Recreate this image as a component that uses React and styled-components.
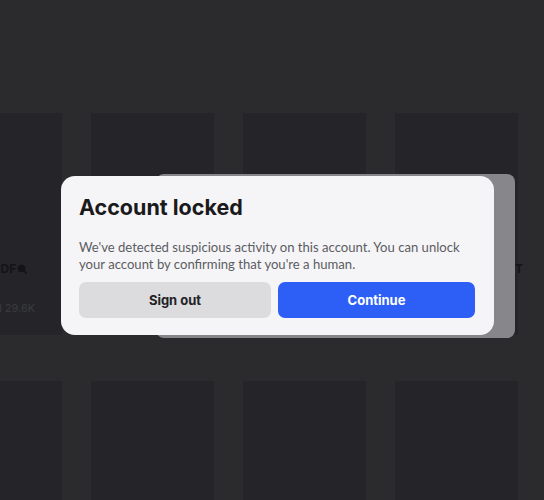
import styled, { createGlobalStyle } from 'styled-components';

const GlobalStyle = createGlobalStyle`
    html, body {
        margin: 0;
        padding: 0;
        background: #2b2b2d;
        font-family: Inter, 'Noto Sans', sans-serif;
    }
`

// only the edges of the first and last card peek out from behind the dialog
const cards = [
    { title: 'SHARE PDF', stat: '♡ Viewed 29.6K', bubble: true },
    { title: '', stat: '' },
    { title: '', stat: '' },
    { title: 'AI ARTS SHORTCUT', stat: '' },
    { title: '', stat: '' },
    { title: '', stat: '' },
    { title: '', stat: '' },
    { title: '', stat: '' },
];

export default function App() {
    return (
        <Page>
            <GlobalStyle />
            <Grid>
                {cards.map((c, i) => (
                    <Card key={i}>
                        <Thumb />
                        <CardTitle>
                            {c.title}
                            {c.bubble && (
                                <svg viewBox='0 0 12 12' width='10' height='10'>
                                    <circle cx='5.5' cy='5.5' r='4.5' fill='#141416' />
                                    <path d='M8 8l3 3' stroke='#141416' strokeWidth='2' strokeLinecap='round' />
                                </svg>
                            )}
                        </CardTitle>
                        <CardStat>{c.stat}</CardStat>
                    </Card>
                ))}
            </Grid>

            <BackSheet />
            <Dialog>
                <Title>Account locked</Title>
                <Body>
                    We've detected suspicious activity on this account. You can unlock your account by confirming that you're a human.
                </Body>
                <Actions>
                    <Button>Sign out</Button>
                    <Button $primary>Continue</Button>
                </Actions>
            </Dialog>
        </Page>
    )
}

const Page = styled.div`
    position: relative;
    width: 544px;
    height: 500px;
    overflow: hidden;
    background: #2b2b2d;
`

const Grid = styled.div`
    display: grid;
    grid-template-columns: repeat(4, 123px);
    grid-auto-rows: 222px;
    column-gap: 29px;
    row-gap: 46px;
    padding-top: 113px;
    margin-left: -61px;
`

const Card = styled.div`
    display: flex;
    flex-direction: column;
    background: #252529;
    border-radius: 3px;
    padding: 0 10px;
`

const Thumb = styled.div`
    height: 148px;
`

const CardTitle = styled.div`
    display: flex;
    align-items: center;
    gap: 1px;
    min-height: 16px;
    white-space: nowrap;
    font-size: 12px;
    font-weight: 700;
    color: #141416;
    line-height: 16px;
`

const CardStat = styled.div`
    margin-top: 24px;
    white-space: nowrap;
    font-size: 11px;
    color: #3a3a3e;
`

const BackSheet = styled.div`
    position: absolute;
    left: 156px;
    top: 174px;
    width: 359px;
    height: 164px;
    border-radius: 8px;
    background: #87878b;
`

const Dialog = styled.div`
    position: absolute;
    left: 61px;
    top: 176px;
    width: 433px;
    box-sizing: border-box;
    padding: 18px 19px 17px 18px;
    background: #f5f5f7;
    border-radius: 14px;
`

const Title = styled.h2`
    margin: 0;
    font-size: 21.5px;
    line-height: 26px;
    font-weight: 700;
    color: #1a1a1c;
`

const Body = styled.p`
    margin: 19px 0 0;
    font-family: Lato, 'Noto Sans', sans-serif;
    font-size: 13.1px;
    line-height: 17px;
    color: #5c5c62;
`

const Actions = styled.div`
    display: grid;
    grid-template-columns: 192fr 197fr;
    gap: 7px;
    margin-top: 9px;
`

const Button = styled.button`
    height: 36px;
    border: none;
    border-radius: 7px;
    font-family: inherit;
    font-size: 13px;
    font-weight: 700;
    cursor: pointer;
    background: ${p => (p.$primary ? '#2d5ff6' : '#dcdcdf')};
    color: ${p => (p.$primary ? '#ffffff' : '#222225')};
`
